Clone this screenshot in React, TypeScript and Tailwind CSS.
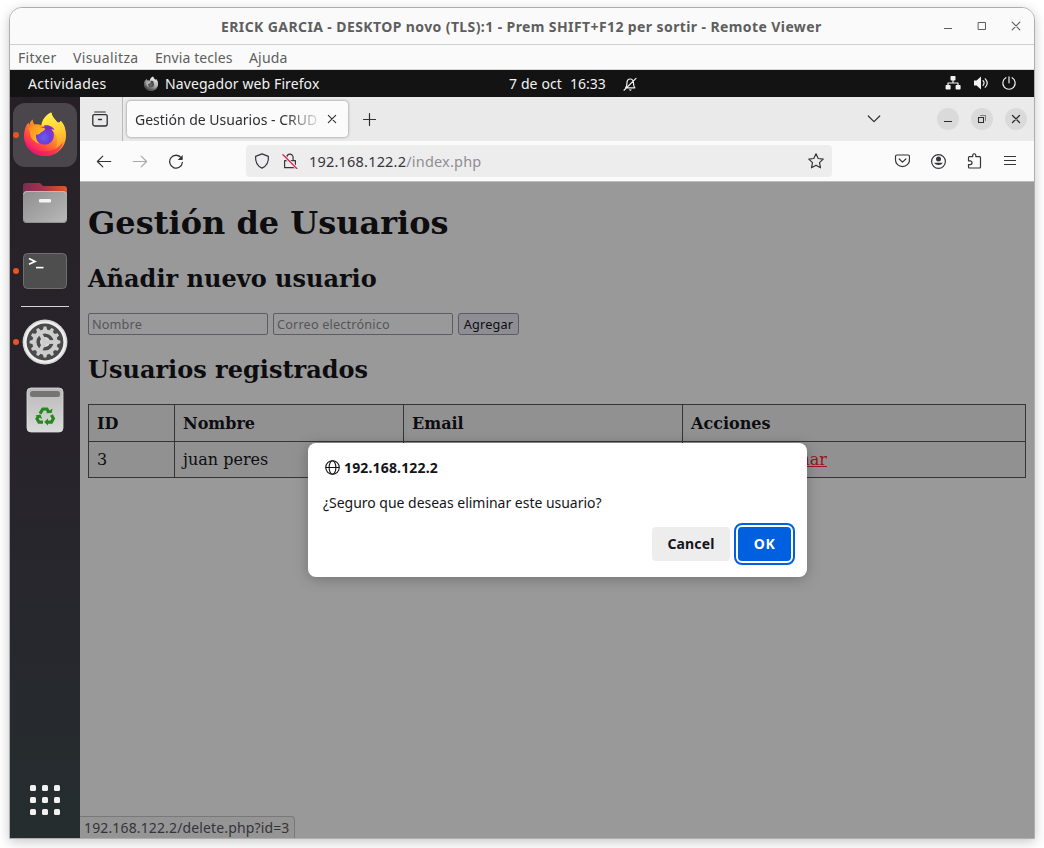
import type { ReactNode } from 'react';

const SANS = "font-['Noto_Sans','Open_Sans',sans-serif]";
const SERIF = "font-['DejaVu_Serif','Liberation_Serif',serif]";

function Icon({ children, className = 'size-4' }: { children: ReactNode; className?: string }) {
  return (
    <svg
      viewBox="0 0 16 16"
      fill="none"
      stroke="currentColor"
      strokeWidth="1.2"
      strokeLinecap="round"
      strokeLinejoin="round"
      className={`shrink-0 ${className}`}
    >
      {children}
    </svg>
  );
}

function FirefoxLogo({ className }: { className: string }) {
  return (
    <svg viewBox="0 0 48 48" className={className}>
      <defs>
        <linearGradient id="ff-body" x1="0.85" y1="0.1" x2="0.2" y2="0.95">
          <stop offset="0" stopColor="#fff04a" />
          <stop offset="0.3" stopColor="#ffb92a" />
          <stop offset="0.55" stopColor="#ff7a2c" />
          <stop offset="0.8" stopColor="#ff3a4e" />
          <stop offset="1" stopColor="#e3108a" />
        </linearGradient>
        <linearGradient id="ff-flame" x1="0.4" y1="0" x2="0.6" y2="1">
          <stop offset="0" stopColor="#fff350" />
          <stop offset="0.5" stopColor="#ffd034" />
          <stop offset="1" stopColor="#ff9a28" />
        </linearGradient>
        <radialGradient id="ff-globe" cx="0.45" cy="0.6" r="0.6">
          <stop offset="0" stopColor="#6a5cf0" />
          <stop offset="0.6" stopColor="#6a3fd8" />
          <stop offset="1" stopColor="#9a35c8" />
        </radialGradient>
        <linearGradient id="ff-tail" x1="0" y1="0" x2="1" y2="0.6">
          <stop offset="0" stopColor="#ff8a1e" />
          <stop offset="1" stopColor="#ffc02c" />
        </linearGradient>
      </defs>
      <path
        d="M30.2 1.600c.8 4 3.400 6.600 6.400 9.800 1.600.4 3 .2 3-1.600 3.600 3 5.400 9 5.400 14.600C45 36.200 35.600 45 24 45S3 36.400 3 25c0-5.600 1.600-9.800 4.400-13.400.4 1 .6 1.800.8 2.600.4-2.400 1.400-4 3.400-5.800.2 2 .8 3.800 2 5.200 2-.6 4.600-.4 6.600.6 1-5.600 4.400-10 10-12.600z"
        fill="url(#ff-body)"
      />
      <path
        d="M30.200 1.600c.8 4 3.400 6.600 6.400 9.800 1.600.4 3 .2 3-1.600 3.600 4 5.200 9.400 4.600 14.200-.8 7-5.200 12-10.200 14.400 2.600-4.400 3.200-9 1.200-14-1.800-4.600-5.600-7-10.200-8.200-1.800-.6-3.200-1.200-4.200-2 .8-5.600 4-9.800 9.400-12.600z"
        fill="url(#ff-flame)"
      />
      <circle cx="23.800" cy="24.600" r="9.200" fill="url(#ff-globe)" />
      <path d="M23 14.400c4-.8 9 .8 10.600 4.600-2-.8-3-.8-4-.6 2 1.400 3 3.400 3.200 5-2.200-3.600-5-4.600-8.600-5z" fill="#7c2fc0" />
      <path
        d="M7.400 17.200c3-2.200 6.200-3 9.200-2.800 1.600 1.600 3.600 2.200 6.800 2.600 1 .4.600 1.600-.2 2.200-1.200 1-3 1.800-3.800 2.800-1 1.400-2.600 1.800-4.400 1.600-.4 4 .8 7.200 3.400 9.200-5.600-1.600-9.400-6-9.400-11.200z"
        fill="url(#ff-tail)"
      />
      <path d="M3.400 28c2.400 7.600 10.200 12.600 19.600 12.600 8.600 0 15.600-4 19.400-10C40.200 39.400 32.800 45 24 45 13 45 4.600 38 3.400 28z" fill="#f0185f" opacity=".55" />
    </svg>
  );
}

function FilesIcon() {
  return (
    <svg viewBox="0 0 46 42" className="h-[42px] w-[46px]">
      <defs>
        <linearGradient id="fl-back" x1="0" x2="1">
          <stop offset="0" stopColor="#7f2a57" />
          <stop offset="0.5" stopColor="#a5364a" />
          <stop offset="1" stopColor="#ea5420" />
        </linearGradient>
        <linearGradient id="fl-front" x1="0" y1="0" x2="1" y2="1">
          <stop offset="0" stopColor="#8e8e8e" />
          <stop offset="1" stopColor="#b9b9b9" />
        </linearGradient>
      </defs>
      <path d="M1 4a3 3 0 0 1 3-3h14l3 3h21a3 3 0 0 1 3 3v12H1z" fill="url(#fl-back)" />
      <rect x="1" y="9" width="44" height="32" rx="4" fill="url(#fl-front)" />
      <path d="M1.500 12.500a3.500 3.500 0 0 1 3.500-3h36a3.500 3.500 0 0 1 3.500 3" fill="none" stroke="#c4c4c4" strokeWidth=".8" />
      <path d="M1.500 37.500a3.500 3.500 0 0 0 3.500 3h36a3.500 3.500 0 0 0 3.500-3" fill="none" stroke="#8a8a8a" strokeWidth=".8" />
      <rect x="17" y="17" width="12" height="3.400" rx="1.200" fill="#f4f4f4" />
    </svg>
  );
}

function TerminalIcon() {
  return (
    <svg viewBox="0 0 46 38" className="h-[38px] w-[46px]">
      <rect x="1.500" y="1.500" width="43" height="35" rx="4" fill="#4e4e4e" stroke="#6f6f6f" />
      <path d="M7 6.500l6 2.900-6 2.900" fill="none" stroke="#fff" strokeWidth="1.700" />
      <path d="M14 15.600h7.500" stroke="#fff" strokeWidth="1.600" />
    </svg>
  );
}

function SettingsIcon() {
  const teeth = Array.from({ length: 12 }, (_, i) => i * 30);
  return (
    <svg viewBox="0 0 46 46" className="size-[46px]">
      <circle cx="23" cy="23" r="22.400" fill="#d6d6d6" />
      <circle cx="23" cy="23" r="20.800" fill="#efefef" />
      <circle cx="23" cy="23" r="18.400" fill="#4b4b4b" />
      <circle cx="23" cy="23" r="10.600" fill="none" stroke="#cdcdcd" strokeWidth="4" />
      {teeth.map((a) => (
        <path key={a} d="M20.800 11l.9-3.400h2.600l.9 3.400z" fill="#cdcdcd" transform={`rotate(${a} 23 23)`} />
      ))}
      <circle cx="23" cy="23" r="5" fill="#d9d9d9" />
      {[0, 120, 240].map((a) => (
        <path key={a} d="M23 21.100h10v3.800H23z" fill="#cdcdcd" transform={`rotate(${a} 23 23)`} />
      ))}
    </svg>
  );
}

function TrashIcon() {
  return (
    <svg viewBox="0 0 38 46" className="h-[46px] w-[38px]">
      <defs>
        <linearGradient id="tr" x1="0" y1="0" x2="0" y2="1">
          <stop offset="0" stopColor="#b9b9b9" />
          <stop offset="1" stopColor="#dadada" />
        </linearGradient>
      </defs>
      <rect x="1" y="1" width="36" height="44" rx="4" fill="url(#tr)" stroke="#dedede" strokeWidth=".8" />
      <rect x="4" y="4" width="30" height="6" rx="2.500" fill="#747474" />
      <g fill="none" stroke="#26891f" strokeWidth="3.200">
        <path d="M14 26.600l2.800-4.600h4l2 3" />
        <path d="M25.400 28l2 3.500-2 3.700h-4" />
        <path d="M17 35.200h-4l-2-3.500 1.600-2.800" />
      </g>
      <g fill="#26891f">
        <path d="M20 26.200l5.600-.2 1-4.600z" />
        <path d="M22 31.600v7l-3.800-3.500z" />
        <path d="M9.400 28.400l5-.8 1.800 4.400z" />
      </g>
    </svg>
  );
}

function DockSlot({ children, running, className }: { children: ReactNode; running?: boolean; className: string }) {
  return (
    <div className={`flex shrink-0 items-center ${className}`}>
      <span className={`ml-[3px] size-[6px] shrink-0 rounded-full ${running ? 'bg-[#e95420]' : ''}`} />
      <div className="flex w-[52px] shrink-0 justify-center">{children}</div>
    </div>
  );
}

function Dock() {
  return (
    <aside className="flex w-[70px] shrink-0 flex-col bg-linear-to-b from-[#262026] via-[#28222b] via-40% to-[#252d2f]">
      <div className="mt-[6px] ml-[3px] flex h-16 w-16 shrink-0 items-center rounded-xl bg-[#4a464b]">
        <span className="size-[6px] shrink-0 rounded-full bg-[#e95420]" />
        <div className="ml-[3px] flex w-[46px] justify-center">
          <FirefoxLogo className="size-12 shrink-0" />
        </div>
      </div>
      <DockSlot className="mt-[15px] h-[42px]">
        <FilesIcon />
      </DockSlot>
      <DockSlot running className="mt-[28px] h-[38px]">
        <TerminalIcon />
      </DockSlot>
      <div className="mt-[16px] ml-[11px] h-px w-12 shrink-0 bg-[#d5d3d5]" />
      <DockSlot running className="mt-[12px] h-[46px]">
        <SettingsIcon />
      </DockSlot>
      <DockSlot className="mt-[22px] h-[46px]">
        <TrashIcon />
      </DockSlot>
      <div className="mt-auto mb-[23px] ml-[20px] grid w-[30px] grid-cols-3 gap-[6px]">
        {Array.from({ length: 9 }, (_, i) => (
          <span key={i} className="size-[6px] rounded-[1.500px] bg-[#f2f1ef]" />
        ))}
      </div>
    </aside>
  );
}

function TitleBar() {
  return (
    <header className="flex h-[37px] shrink-0 items-center border-b border-[#cfcfcf] bg-[#fafafa] text-[#5e5e5e]">
      <h1 className="ml-[211px] w-[722px] pt-[2px] text-[14px] leading-5 font-bold tracking-[0.4px] whitespace-nowrap">
        ERICK GARCIA - DESKTOP novo (TLS):1 - Prem SHIFT+F12 per sortir - Remote Viewer
      </h1>
      <div className="flex shrink-0 items-center">
        <Icon className="-ml-[3px] size-4">
          <path d="M4 10.500h8" strokeLinecap="butt" strokeWidth="1" />
        </Icon>
        <Icon className="ml-[18px] size-4">
          <path d="M4.500 4.500h7v7h-7z" strokeLinejoin="miter" strokeWidth="1" />
        </Icon>
        <Icon className="ml-[18px] size-4">
          <path d="M4.200 4.200l7.600 7.600M11.800 4.200l-7.600 7.600" />
        </Icon>
      </div>
    </header>
  );
}

function MenuBar() {
  return (
    <nav className="flex h-[25px] shrink-0 items-center border-b border-[#d8d8d8] bg-[#fafafa] pt-[2px] pl-2 text-[14px] leading-5 whitespace-nowrap text-[#5e5e5e]">
      <span className="w-[55px] tracking-[0.29px]">Fitxer</span>
      <span className="w-[82px] tracking-[0.36px]">Visualitza</span>
      <span className="w-[94px] tracking-[0.08px]">Envia tecles</span>
      <span className="tracking-[0.16px]">Ajuda</span>
    </nav>
  );
}

function SystemBar() {
  return (
    <div className="flex h-[27px] shrink-0 items-center bg-[#131313] text-[14px] leading-5 whitespace-nowrap text-[#f2f2f2]">
      <span className="ml-[18px] w-[115px] tracking-[0.34px]">Actividades</span>
      <FirefoxLogo className="size-4 shrink-0 grayscale" />
      <span className="ml-[6px] w-[344px] tracking-[0.1px]">Navegador web Firefox</span>
      <span className="w-[61px] tracking-[0.12px]">7 de oct</span>
      <span className="w-[52px]">16:33</span>
      <Icon className="size-4">
        <path d="M3.500 11.800h9.400c-1-1-1.400-2-1.400-4.300 0-2.700-1.100-4.500-3.300-4.500S4.900 4.800 4.900 7.500c0 2.300-.4 3.300-1.400 4.300zM2 14.200L14 2.400" />
        <path d="M6.600 13.400h3.400l-1.700 1.500z" fill="currentColor" stroke="none" />
      </Icon>
      <div className="mr-[17px] ml-auto flex items-center gap-[12px] pb-px">
        <Icon className="size-4">
          <g fill="currentColor" stroke="none">
            <rect x="5.500" y="1" width="5" height="4.500" rx=".8" />
            <rect x=".6" y="10" width="5" height="4.500" rx=".8" />
            <rect x="10.600" y="10" width="5" height="4.500" rx=".8" />
          </g>
          <path d="M8 5v3M3 10.500V8h10v2.500" />
        </Icon>
        <Icon className="size-4">
          <path d="M1 5.500h2.600L8 1.500v13l-4.400-4H1z" fill="currentColor" stroke="none" />
          <path d="M10 5.700c1.200 1.300 1.200 3.300 0 4.600M12.300 3.800c2.300 2.500 2.300 5.900 0 8.400" />
        </Icon>
        <Icon className="size-4">
          <path d="M8 1.800v6M4.900 2.700a6.200 6.200 0 1 0 6.200 0" />
        </Icon>
      </div>
    </div>
  );
}

function RoundButton({ children }: { children: ReactNode }) {
  return <span className="flex size-[22px] shrink-0 items-center justify-center rounded-full bg-[#dadada] text-[#2e2e2e]">{children}</span>;
}

function TabStrip() {
  return (
    <div className="flex h-[44px] shrink-0 items-center bg-[#eaeaea] text-[#2e2e33]">
      <div className="flex h-full w-[43px] shrink-0 items-center border-r border-[#b9b9bb] pl-3">
        <Icon className="size-4">
          <path d="M2.700 1h10.600" />
          <path d="M2.200 3.600h11.600a1.400 1.400 0 0 1 1.400 1.400v8a2 2 0 0 1-2 2H2.800a2 2 0 0 1-2-2V5a1.400 1.400 0 0 1 1.400-1.400zM6.500 8.500h3" strokeWidth="1.300" />
        </Icon>
      </div>
      <div className="ml-[4px] flex h-9 w-[221px] shrink-0 items-center rounded bg-[#fbfbfb] pl-[8px] shadow-[0_0_3px_rgba(0,0,0,0.45)]">
        <span className="w-[188px] shrink-0 overflow-hidden mask-r-from-[150px] mask-r-to-[188px] pt-[2px] text-[14px] leading-5 whitespace-nowrap">
          Gestión de Usuarios - CRUD PHP
        </span>
        <Icon className="ml-px size-4">
          <path d="M4.300 4.300l7.400 7.400M11.700 4.300l-7.400 7.400" strokeWidth="1.100" />
        </Icon>
      </div>
      <Icon className="ml-[14px] size-4">
        <path d="M7.500 2.500v12M1.500 8.500h12" strokeWidth="1.200" />
      </Icon>
      <Icon className="ml-auto size-4">
        <path d="M2.300 5l5.700 5.700L13.700 5" />
      </Icon>
      <div className="mr-[7px] ml-[55px] flex gap-[12px]">
        <RoundButton>
          <Icon className="size-4">
            <path d="M4 10.500h8" strokeLinecap="butt" strokeWidth="1" />
          </Icon>
        </RoundButton>
        <RoundButton>
          <Icon className="size-4">
            <path d="M4.500 6.500h5v5h-5z" strokeLinejoin="miter" strokeWidth="1.100" />
            <path d="M6.500 4.500h5v5" strokeLinejoin="miter" strokeWidth=".9" opacity=".6" />
          </Icon>
        </RoundButton>
        <RoundButton>
          <Icon className="size-4">
            <path d="M4.500 4.500l7 7M11.500 4.500l-7 7" strokeWidth="1.300" />
          </Icon>
        </RoundButton>
      </div>
    </div>
  );
}

function Toolbar() {
  return (
    <div className="flex h-[41px] shrink-0 items-center border-b border-[#bcbcbe] bg-[#fbfbfb] text-[#35353a]">
      <Icon className="ml-[16px] size-4">
        <path d="M14.800 8.500H1.400M6.800 3.100L1.400 8.500l5.400 5.400" strokeWidth="1.200" />
      </Icon>
      <Icon className="ml-[20px] size-4 text-[#a9a9ab]">
        <path d="M1.200 8.500h13.400M9.200 3.100l5.400 5.400-5.400 5.400" strokeWidth="1.200" />
      </Icon>
      <Icon className="ml-[20px] size-4">
        <path d="M13.300 5A6.400 6.400 0 1 0 14.400 9.500" strokeWidth="1.300" />
        <path d="M14.700 1.900v4.400a.6.600 0 0 1-.6.600H9.700z" fill="currentColor" stroke="none" />
      </Icon>
      <div className="ml-[62px] flex h-8 w-[586px] shrink-0 items-center rounded bg-[#ededee]">
        <Icon className="ml-2 size-4">
          <path d="M8 .9l6.400 2.500c.4 5.400-1.600 9.700-6.400 11.700C3.200 13.100 1.200 8.800 1.600 3.400z" />
        </Icon>
        <Icon className="ml-[12px] size-4">
          <path d="M2.600 7.700h10.800v7H2.600zM4.900 7.500V4.300a3.100 3.100 0 0 1 6.200 0v3.200" />
          <path d="M1 2.200L15 15.400" stroke="#ededee" strokeWidth="3" />
          <path d="M1 1.800L14.800 15.400" stroke="#e22850" strokeWidth="1.400" />
        </Icon>
        <span className="ml-[11px] text-[14.500px] leading-5 tracking-[0.2px] whitespace-nowrap">
          192.168.122.2<span className="text-[#8f8f93]">/index.php</span>
        </span>
        <Icon className="mr-[8px] ml-auto size-4">
          <path d="M8 .8l2.200 4.700 5 .6-3.700 3.500 1 5.200L8 12.200l-4.500 2.600 1-5.200L.8 6.100l5-.6z" strokeWidth="1.200" />
        </Icon>
      </div>
      <div className="mr-[16px] ml-auto flex items-center gap-[20px]">
        <Icon className="size-4">
          <path d="M3 2h11a1.500 1.500 0 0 1 1.500 1.500V7a7 6.600 0 0 1-14 0V3.500A1.500 1.500 0 0 1 3 2zM5.200 6l3.300 3.100L11.800 6" strokeWidth="1.200" />
        </Icon>
        <Icon className="size-4">
          <circle cx="8.500" cy="8.500" r="6.900" strokeWidth="1.200" />
          <circle cx="8.500" cy="6" r="2.500" fill="currentColor" stroke="none" />
          <path d="M4.100 9.800h8.800a4.800 3.800 0 0 1-8.800 0z" fill="currentColor" stroke="none" />
        </Icon>
        <Icon className="size-4">
          <path d="M2.500 5.200v-.7a.9.900 0 0 1 .9-.9h3.300V2.300a1.500 1.500 0 0 1 3.100 0v1.300h3.800a.9.900 0 0 1 .9.900v9.600a.9.900 0 0 1-.9.900H3.400a.9.900 0 0 1-.9-.9v-2.500h1.600a1.900 1.900 0 0 0 0-3.800H2.500z" strokeWidth="1.200" />
        </Icon>
        <Icon className="size-4">
          <path d="M2 3.500h12M2 7.500h12M2 11.500h12" strokeLinecap="butt" />
        </Icon>
      </div>
    </div>
  );
}

function ConfirmDialog() {
  return (
    <div role="dialog" className="absolute top-[261px] left-[228px] flex h-[134px] w-[499px] flex-col rounded-lg bg-white px-[16px] text-[14px] leading-5 whitespace-nowrap text-[#15141a] shadow-[0_2px_14px_rgba(0,0,0,0.25)]">
      <div className="mt-[15px] flex items-center">
        <Icon className="mb-px ml-px size-[15px]">
          <circle cx="8" cy="8" r="7.200" />
          <ellipse cx="8" cy="8" rx="3.600" ry="7.200" />
          <path d="M1 8h14" />
        </Icon>
        <span className="ml-[4px] font-bold tracking-[0.16px]">192.168.122.2</span>
      </div>
      <p className="-ml-px mt-[15px] tracking-[-0.02px]">¿Seguro que deseas eliminar este usuario?</p>
      <div className="mt-[14px] flex justify-end gap-2">
        <button className="h-[34px] w-[78px] rounded bg-[#ededee] font-bold tracking-[0.13px]">Cancel</button>
        <button className="h-[34px] w-[53px] rounded bg-[#0060df] font-bold tracking-[0.6px] text-white outline-2 outline-offset-2 outline-[#0060df]">OK</button>
      </div>
    </div>
  );
}

function Page() {
  const cell = 'border border-[#343437] px-2';
  return (
    <main className={`relative flex flex-1 flex-col bg-[#99999a] px-2 text-[#0d0d10] ${SERIF}`}>
      <h1 className="mt-[22px] text-[32px] leading-[38px] font-bold whitespace-nowrap">Gestión de Usuarios</h1>
      <h2 className="mt-[23px] text-[24px] leading-[28px] font-bold">Añadir nuevo usuario</h2>
      <form className={`mt-[20px] flex h-[22px] shrink-0 gap-[5px] text-[12.700px] leading-4 ${SANS}`}>
        <input placeholder="Nombre" className="w-[180px] rounded-[2px] border border-[#5c5b66] px-[3px] tracking-[0.14px] placeholder:text-[#55555a]" />
        <input placeholder="Correo electrónico" className="w-[180px] rounded-[2px] border border-[#5c5b66] px-[3px] tracking-[0.17px] placeholder:text-[#55555a]" />
        <button type="button" className="w-[61px] rounded-[3px] border border-[#5c5b66] bg-[#8d8d93] tracking-[0.18px]">
          Agregar
        </button>
      </form>
      <h2 className="mt-[21px] text-[24px] leading-[28px] font-bold">Usuarios registrados</h2>
      <table className="mt-[20px] w-[938px] table-fixed border-collapse bg-[#919192] text-[16px] leading-[19px]">
        <colgroup>
          <col className="w-[86px]" />
          <col className="w-[229px]" />
          <col className="w-[279px]" />
          <col />
        </colgroup>
        <thead>
          <tr className="h-[37px] text-left">
            <th className={cell}>ID</th>
            <th className={cell}>Nombre</th>
            <th className={cell}>Email</th>
            <th className={cell}>Acciones</th>
          </tr>
        </thead>
        <tbody>
          <tr className="h-[36px]">
            <td className={cell}>3</td>
            <td className={cell}>juan peres</td>
            <td className={cell} />
            <td className={`${cell} whitespace-nowrap text-[#99141c]`}>
              <a className="underline">Editar</a> | <a className="underline">Eliminar</a>
            </td>
          </tr>
        </tbody>
      </table>
      <div className={`absolute bottom-0 left-0 h-[22px] w-[215px] rounded-tr border-t border-r border-[#79797b] bg-[#959596] pl-1 text-[14px] leading-[21px] tracking-[0.14px] whitespace-nowrap text-[#343437] ${SANS}`}>
        192.168.122.2/delete.php?id=3
      </div>
      <div className={SANS}>
        <ConfirmDialog />
      </div>
    </main>
  );
}

export default function App() {
  return (
    <div className={`h-[848px] w-[1044px] overflow-hidden bg-white pt-[7px] pl-[9px] ${SANS}`}>
      <div className="flex h-[832px] w-[1026px] flex-col overflow-hidden rounded-t-[13px] border border-[#aeaeae] bg-[#fafafa] shadow-[0_3px_12px_rgba(0,0,0,0.22)]">
        <TitleBar />
        <MenuBar />
        <SystemBar />
        <div className="flex min-h-0 flex-1">
          <Dock />
          <div className="flex min-w-0 flex-1 flex-col">
            <TabStrip />
            <Toolbar />
            <Page />
          </div>
        </div>
      </div>
    </div>
  );
}
